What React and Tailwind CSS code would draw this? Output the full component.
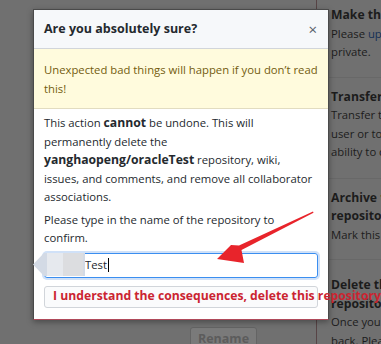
export default function App() {
  return (
    <div className="relative w-[381px] h-[344px] overflow-hidden bg-[#707070] font-['Open_Sans',sans-serif] text-[11.3px]">
      {/* background page */}
      <div className="flex h-full">
        <div className="w-[316px] shrink-0 pt-[327px] pl-[190px]">
          <div className="w-[67px] h-[24px] rounded-[3px] border border-[#646464] bg-[#7a7a7a] text-[#5c5c5c] font-bold text-[12.5px] leading-[22px] text-center">
            Rename
          </div>
        </div>
        <div className="flex-1 border-l border-[#574446] flex flex-col text-[#1c1c1c] leading-[18.5px] whitespace-nowrap">
          <div className="pl-[14px] pt-[6px] pb-[15px] border-b border-[#686868]">
            <div className="font-bold text-[12.2px]">Make this repository private</div>
            <div>
              Please <span className="text-[#142f55]">upgrade</span> to make
            </div>
            <div>private.</div>
          </div>
          <div className="pl-[14px] pt-[10px] pb-[16px] border-b border-[#686868]">
            <div className="font-bold text-[12.2px]">Transfer ownership</div>
            <div>Transfer this repository to another</div>
            <div>user or to an organization</div>
            <div>ability to create</div>
          </div>
          <div className="pl-[14px] pt-[10px] pb-[15px] border-b border-[#686868]">
            <div className="font-bold text-[12.2px]">
              Archive <span className="text-[#5e4a12]">this</span>
            </div>
            <div className="font-bold text-[12.2px]">repository</div>
            <div>Mark this repository</div>
          </div>
          <div className="pl-[14px] pt-[16px]">
            <div className="font-bold text-[12.2px]">Delete this</div>
            <div className="font-bold text-[12.2px]">repository</div>
            <div>Once you delete</div>
            <div>back. Please be</div>
          </div>
        </div>
      </div>

      {/* modal */}
      <div className="absolute left-[33px] top-[9px] w-[296px] bg-white border border-[#4a4a4a] border-b-[#b04a5a] shadow-[0_2px_6px_rgba(0,0,0,0.35)]">
        <div className="h-[39px] bg-[#f6f8fa] border-b border-[#d1d5da] pl-[10px] pr-[10px] flex items-center justify-between">
          <div className="font-bold text-[12.5px] text-[#24292e]">Are you absolutely sure?</div>
          <div className="text-[#586069] text-[15px] leading-none pr-[1px]">×</div>
        </div>
        <div className="bg-[#fffbdd] text-[#735c0f] px-[10px] pt-[11px] pb-[10px] leading-[19px] border-b border-[#e2dcc0] whitespace-nowrap">
          Unexpected bad things will happen if you don’t read
          <br />
          this!
        </div>
        <div className="px-[10px] pt-[5px] pb-[11px] text-[#24292e] leading-[18.5px] whitespace-nowrap">
          <p>
            This action <b className="text-[12.2px]">cannot</b> be undone. This will
            <br />
            permanently delete the
            <br />
            <b className="text-[12.2px]">yanghaopeng/oracleTest</b> repository, wiki,
            <br />
            issues, and comments, and remove all collaborator
            <br />
            associations.
          </p>
          <p className="mt-[4px]">
            Please type in the name of the repository to
            <br />
            confirm.
          </p>
          <div className="mt-[5px] h-[25px] rounded-[3px] border border-[#3b8ef0] shadow-[0_0_0_2px_rgba(120,170,235,0.35)] flex items-center pl-[5px] text-[#24292e]">
            <span className="inline-block w-[35px] overflow-hidden text-transparent">oracle</span>
            <span>Test</span>
            <span className="inline-block w-px h-[14px] bg-black ml-[1px]" />
          </div>
          <div className="mt-[8px] h-[22px] rounded-[3px] border border-[#d1d5da] bg-[#fafbfc] flex items-center pl-[8px] overflow-visible">
            <span className="font-bold text-[#cb2431] text-[12.2px]">
              I understand the consequences, delete this repository
            </span>
          </div>
        </div>
      </div>

      {/* blurred username patch */}
      <svg className="absolute left-[33px] top-[252px]" width="52" height="25" viewBox="0 0 52 25">
        <polygon points="0,12.5 11,1 52,1 52,24 11,24" fill="#d3dae5" />
        <rect x="14" y="1" width="16" height="23" fill="#e6e9ee" />
        <rect x="30" y="1" width="20" height="23" fill="#dcdde0" />
      </svg>

      {/* red arrow */}
      <svg className="absolute left-0 top-0" width="381" height="344" viewBox="0 0 381 344">
        <polygon
          points="217,259 231,245 239,245.5 313,211.5 313.5,212.8 241.5,250 244,263"
          fill="#e8242b"
        />
      </svg>
    </div>
  );
}
